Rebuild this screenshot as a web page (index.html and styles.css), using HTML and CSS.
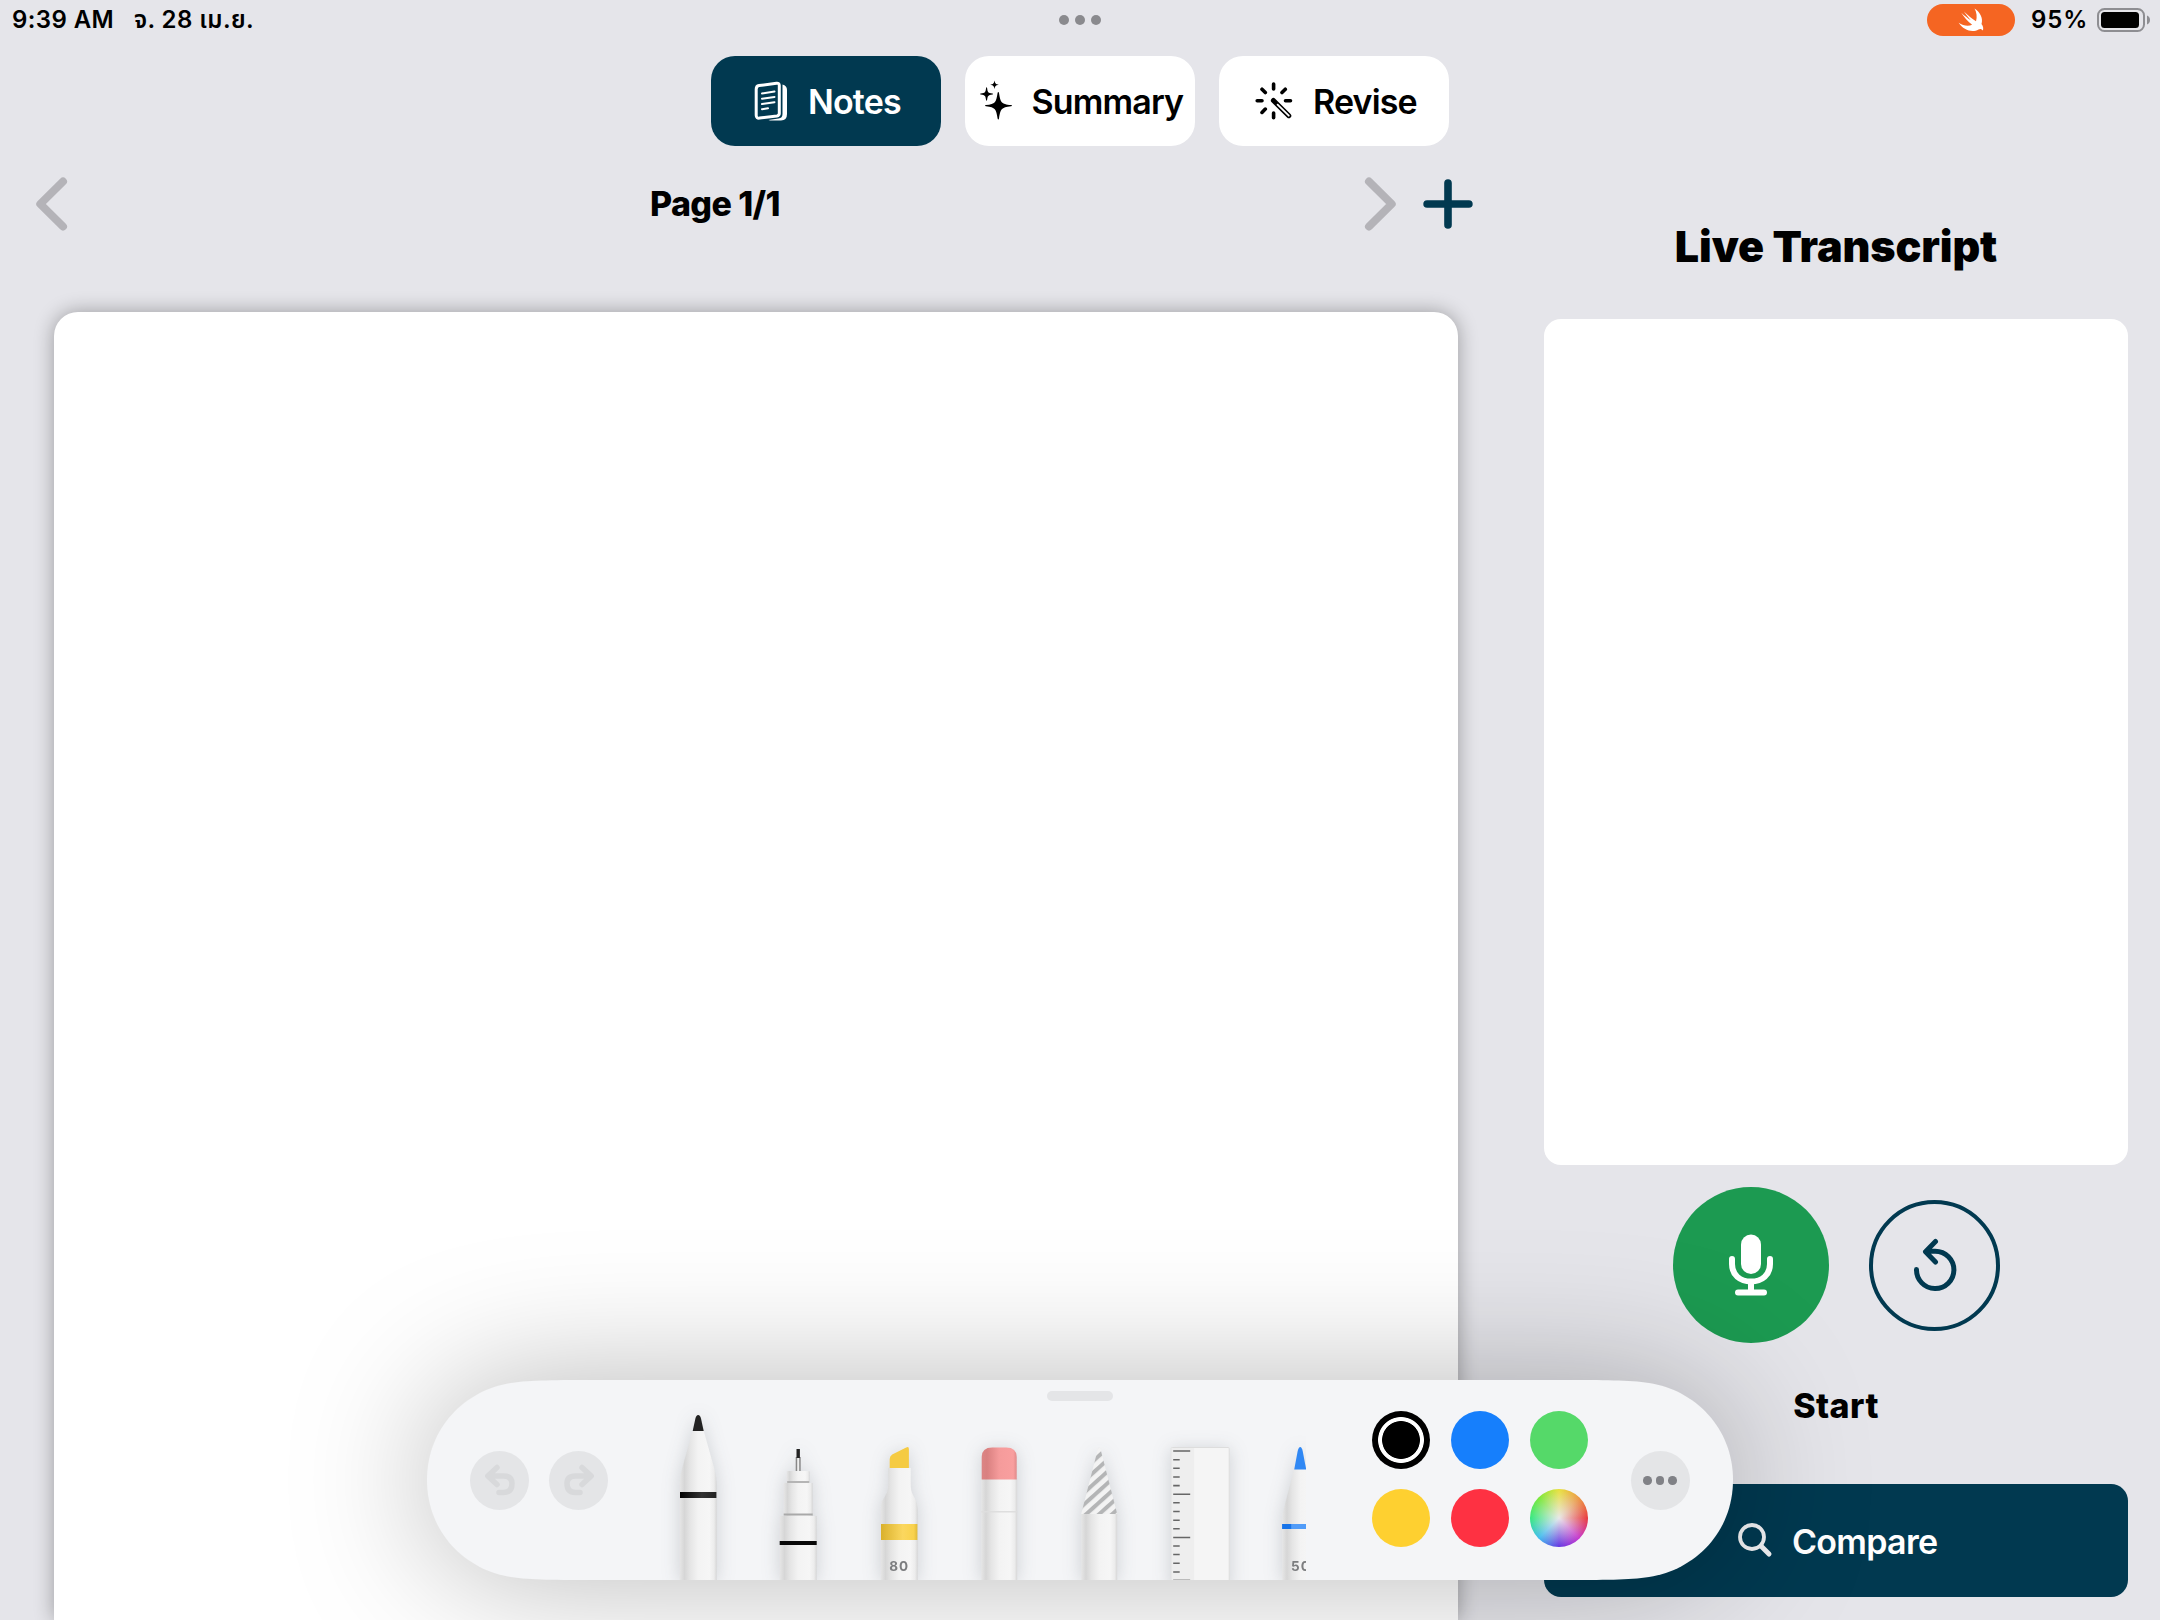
FILE: index.html
```html
<!DOCTYPE html>
<html lang="th">
<head>
<meta charset="utf-8">
<title>Notes</title>
<link rel="stylesheet" href="styles.css">
</head>
<body>
<header class="status">
  <div class="status-side"><span class="time">9:39 AM</span><span class="date">จ. 28 เม.ย.</span></div>
  <div class="dots"><i></i><i></i><i></i></div>
  <div class="status-side status-right">
    <span class="swift-pill"><svg width="26" height="24" viewBox="0 0 26 24"><path fill="#fff" d="M16.500 0.600C22.500 4.600 25.300 10.800 23.500 16C25.400 18.500 25.600 20.800 24.800 22.600C23.700 20.600 22 20.600 20.500 21.400C14.500 25 5.500 22.300 0.600 14.800C5.200 17.900 10.600 18.600 14.100 16.700C9.500 13.200 5.800 8.700 3.200 4.700C6.400 7.600 9.800 10.300 12.800 12.200C10.200 9.400 7.700 6.100 5.900 3.400C9.900 7.200 14.200 10.900 18 13.300C19.300 9.200 18.700 4.600 16.500 0.600Z"/></svg></span>
    <span class="percent">95%</span>
    <svg class="battery" width="54" height="24" viewBox="0 0 54 24"><rect x="1" y="1" width="46" height="22" rx="6.500" fill="none" stroke="#8e8e92" stroke-width="2"/><rect x="4" y="4" width="38" height="16" rx="3.500"/><path fill="#8e8e92" d="M50 7.500C54 9 54 15 50 16.500Z"/></svg>
  </div>
</header>

<nav class="tabs">
  <button class="tab tab-active">
    <svg width="34" height="40" viewBox="0 0 34 40" fill="none" stroke="#fff" stroke-linejoin="round" stroke-linecap="round"><path stroke-width="3" d="M5 4.600L22.500 2.200Q25.300 1.900 25.300 4.600V32.500Q25.300 34.500 22.900 34.900L5.600 37.100Q2.200 37.500 2.200 34.300V8.300Q2.200 5 5 4.600Z"/><path fill="#fff" stroke="none" d="M28.500 3.500Q33 4.500 33 9V33Q33 39.500 27 39.500H19Q15.500 39.500 14.500 38.900L24.500 37.600Q28.500 37 28.500 33Z"/><path stroke-width="2" d="M8 12.400L20.500 10.600M8 17.700L20.500 15.900M8 23L20.500 21.200M8 28.200L14 27.300"/></svg>
    <span>Notes</span>
  </button>
  <button class="tab tab-summary">
    <svg width="33" height="40" viewBox="0 0 33 40"><path d="M18.300 11Q18.800 11 19 12C20.600 21.500 21 23 31 24.100Q32 24.300 32 24.700Q32 25.100 31 25.300C21 26.500 20.600 28 19 37.500Q18.800 38.500 18.300 38.500Q17.800 38.500 17.600 37.500C16 28 15.600 26.500 6 25.300Q5 25.100 5 24.700Q5 24.300 6 24.100C15.600 23 16 21.500 17.600 12Q17.800 11 18.300 11ZM6.600 6.300Q7 6.300 7.100 7C7.700 11.500 8 11.900 12.400 12.600Q13.200 12.700 13.200 13Q13.200 13.300 12.400 13.400C8 14.100 7.700 14.600 7.100 19Q7 19.700 6.600 19.700Q6.200 19.700 6.100 19C5.500 14.600 5.200 14.100 .8 13.400Q0 13.300 0 13Q0 12.700 .8 12.600C5.200 11.900 5.500 11.500 6.100 7Q6.200 6.300 6.600 6.300ZM14.500-.5C15.200 2.800 15.500 3.100 18.800 3.700C15.500 4.300 15.200 4.700 14.500 8C13.800 4.700 13.500 4.300 10.200 3.700C13.500 3.100 13.800 2.800 14.500-.5Z"/></svg>
    <span>Summary</span>
  </button>
  <button class="tab tab-revise">
    <svg width="38" height="38" viewBox="0 0 38 38" fill="none" stroke="#000" stroke-linecap="round"><path stroke-width="3.600" d="M18.600 2.100V7M18.600 31V35.700M2.200 18.800H7M30.500 18.800H35.500M7 7.200L10.300 10.500M30.300 7.200L27 10.500M7 30.400L10.300 27.100"/><path stroke-width="5" d="M18.400 18.400L33.800 33.700"/><path stroke="#fff" stroke-width="1.800" d="M22.600 22.600L33.800 33.700"/></svg>
    <span>Revise</span>
  </button>
</nav>

<main class="workspace">
  <section class="notes">
    <div class="pager">
      <div class="pager-nav">
        <svg width="31" height="54" viewBox="0 0 31 54"><path class="chevron" d="M27 4.500L4.300 27L27 49.500"/></svg>
        <span class="page-label">Page 1/1</span>
        <svg width="31" height="54" viewBox="0 0 31 54"><path class="chevron" d="M4 4.500L26.700 27L4 49.500"/></svg>
      </div>
      <svg width="50" height="50" viewBox="0 0 50 50"><path class="plus" d="M25 4.100V45.900M4.100 25H45.900"/></svg>
    </div>
    <div class="paper"></div>
  </section>
  <aside class="transcript">
    <h1>Live Transcript</h1>
    <div class="transcript-box"></div>
    <div class="controls">
      <button class="mic"><svg width="46" height="64" viewBox="0 0 46 64"><rect x="13" y="1.500" width="20" height="39.500" rx="10" fill="#fff"/><path fill="none" stroke="#fff" stroke-width="6" stroke-linecap="round" d="M4 26V31C4 42 12 48.500 23 48.500S42 42 42 31V26M23 49V58M10 59.500H36"/></svg></button>
      <button class="reset"><svg width="44" height="54" viewBox="0 0 44 54" fill="none" stroke="#013950" stroke-width="5" stroke-linecap="round" stroke-linejoin="round"><path d="M3.500 31.500A18.700 18.700 0 1 0 22.200 13.200H13M22.500 3.500L12.500 13.700L22.500 24"/></svg></button>
    </div>
    <p class="start">Start</p>
    <button class="compare"><svg width="34" height="35" viewBox="0 0 34 35" fill="none" stroke="#f1f1f3"><circle cx="14" cy="14" r="12" stroke-width="3.800"/><path d="M23 23L31 31" stroke-width="5" stroke-linecap="round"/></svg><span>Compare</span></button>
  </aside>
</main>

<div class="palette">
  <svg class="palette-shape" width="1306" height="200" viewBox="0 0 1306 200"><path fill="#f4f5f7" d="M0 100C0 48 38 10 84 3C104 0 130 0 170 0H1136C1176 0 1202 0 1222 3C1268 10 1306 48 1306 100C1306 152 1268 190 1222 197C1202 200 1176 200 1136 200H170C130 200 104 200 84 197C38 190 0 152 0 100Z"/></svg>
  <div class="grabber"></div>
  <div class="palette-row">
    <div class="history">
      <button class="round"><svg width="30" height="30" viewBox="0 0 30 30"><path class="arrow" d="M12 2.500L2.800 11L12 19.500M3.500 11H18.500Q27 11 27 18.500Q27 27.500 18.500 27.500H14"/></svg></button>
      <button class="round"><svg width="30" height="30" viewBox="0 0 30 30"><path class="arrow" d="M18 2.500L27.200 11L18 19.500M26.500 11H11.500Q3 11 3 18.500Q3 27.500 11.500 27.500H16"/></svg></button>
    </div>
    <div class="tools">
      <svg class="tool" viewBox="0 0 100 200">
        <defs>
          <linearGradient id="body" x1="0" x2="1"><stop offset="0" stop-color="#e6e6e6"/><stop offset=".13" stop-color="#d6d6d6"/><stop offset=".28" stop-color="#e5e5e5"/><stop offset=".5" stop-color="#f3f3f3"/><stop offset=".8" stop-color="#f6f6f6"/><stop offset=".93" stop-color="#ececec"/><stop offset="1" stop-color="#d6d6d6"/></linearGradient>
          <linearGradient id="gold" x1="0" x2="1"><stop offset="0" stop-color="#d9b02c"/><stop offset=".6" stop-color="#fbd75f"/><stop offset=".9" stop-color="#f9d24c"/><stop offset="1" stop-color="#dfb93a"/></linearGradient>
          <linearGradient id="pink" x1="0" x2="1"><stop offset="0" stop-color="#dc8585"/><stop offset=".15" stop-color="#d98080"/><stop offset=".5" stop-color="#f59b9b"/><stop offset=".9" stop-color="#f99f9f"/><stop offset="1" stop-color="#e08a8a"/></linearGradient>
          <linearGradient id="ink" x1="0" x2="1"><stop offset="0" stop-color="#000"/><stop offset=".6" stop-color="#333"/><stop offset="1" stop-color="#222"/></linearGradient>
          <pattern id="stripes" width="8.700" height="8.700" patternUnits="userSpaceOnUse" patternTransform="rotate(-42)"><rect width="9" height="9" fill="#f3f3f3"/><rect width="9" height="4" fill="#b4b5b6"/></pattern>
        </defs>
        <path fill="url(#body)" d="M44.500 51H55.500L66 88Q68.500 97 68.500 104V200H31.500V104Q31.500 97 34 88Z"/>
        <path fill="#222" d="M50 35Q52 35 52.800 38.500L55.500 51H44.500L47.200 38.500Q48 35 50 35Z"/>
        <rect x="31.800" y="112" width="36.400" height="6" fill="url(#ink)"/>
      </svg>
      <svg class="tool" viewBox="0 0 100 200">
        <rect x="47.500" y="77" width="5" height="15" fill="#888"/><rect x="49" y="77" width="2" height="14" fill="#eee"/><rect x="48.300" y="69" width="3.400" height="9" fill="#222"/>
        <rect x="38.500" y="91" width="23" height="12" rx="1" fill="url(#body)"/><rect x="39" y="101" width="22" height="2" fill="#b5b5b5"/>
        <rect x="35.500" y="103" width="29" height="33" fill="url(#body)"/><rect x="35.500" y="133.500" width="29" height="2" fill="#a9a9a9"/>
        <rect x="31.500" y="136" width="37" height="64" fill="url(#body)"/><rect x="31.500" y="161" width="37" height="4" fill="#090909"/>
      </svg>
      <svg class="tool" viewBox="0 0 100 200">
        <path fill="url(#body)" d="M39 88H61.500V105C61.500 117 68.500 117 68.500 130V200H31.500V130C31.500 117 39 117 39 105Z"/>
        <path fill="#f5cb42" d="M40.500 88V79Q40.500 76 43 74.500L57 67.500Q59.700 66 59.700 69V88Z"/>
        <rect x="31.800" y="144" width="36.400" height="16" fill="url(#gold)"/><text class="tool-size" x="50" y="191" text-anchor="middle">80</text>
      </svg>
      <svg class="tool" viewBox="0 0 100 200">
        <rect x="32" y="98" width="36" height="102" fill="url(#body)"/><path fill="url(#pink)" d="M32.500 99.500V77Q32.500 67.500 43 67.500H57Q67.500 67.500 67.500 77V99.500Z"/><rect x="32" y="131" width="36" height="1.500" fill="#dedede"/>
      </svg>
      <svg class="tool" viewBox="0 0 100 200">
        <path fill="url(#stripes)" d="M47.700 69Q49 66 50.300 69L67 134H31Z"/><rect x="31" y="134" width="36" height="66" fill="url(#body)"/>
      </svg>
      <svg class="tool" viewBox="0 0 100 200">
        <rect x="21" y="67.500" width="58" height="140" rx="1" fill="#f5f5f5" stroke="#dddddd"/><rect x="21.500" y="68" width="22.500" height="135" fill="#eeeeee"/>
        <path stroke="#666" stroke-width="1.600" d="M23 71H40M23 114.200H40M23 157.500H40M23 79.700H29.500M23 88.300H29.500M23 97H29.500M23 105.600H29.500M23 122.800H29.500M23 131.500H29.500M23 140.200H29.500M23 148.800H29.500M23 166H29.500M23 174.500H29.500M23 183.200H29.500M23 192H29.500"/><path stroke="#bbb" d="M23 199.500H40"/>
      </svg>
      <svg class="tool" viewBox="0 0 100 200">
        <path fill="url(#body)" d="M44 89H56L66 127Q68 134 68 140V200H32V140Q32 134 34 127Z"/>
        <path fill="#3088f4" d="M50 67Q51.500 67 52.500 71L56 89.500H44L47.500 71Q48.500 67 50 67Z"/>
        <rect x="32" y="144" width="36" height="5" fill="#519cf8"/><rect x="32" y="144" width="9" height="5" fill="#1673e8"/><text class="tool-size" x="50.700" y="191" text-anchor="middle">50</text>
      </svg>
    </div>
    <div class="swatches">
      <span class="swatch black"></span><span class="swatch blue"></span><span class="swatch green"></span>
      <span class="swatch yellow"></span><span class="swatch red"></span><span class="swatch wheel"></span>
    </div>
    <button class="round more"><i></i><i></i><i></i></button>
  </div>
</div>
</body>
</html>
```
FILE: styles.css
```css
* { box-sizing: border-box; }
body {
  position: relative;
  display: flex;
  flex-direction: column;
  width: 2160px;
  height: 1620px;
  margin: 0;
  overflow: hidden;
  background: #e5e5ea;
  color: #000;
  font-family: Inter, "Noto Sans Thai", "Noto Sans", sans-serif;
}
button { border: 0; padding: 0; font: inherit; color: inherit; background: none; }
svg { display: block; flex: none; overflow: visible; }

.status {
  display: grid;
  grid-template-columns: 1fr auto 1fr;
  align-items: center;
  height: 40px;
  font-size: 24px;
  font-weight: 600;
  line-height: 40px;
  white-space: nowrap;
}
.status-side { display: flex; align-items: center; height: 40px; padding-left: 12px; }
.time { width: 122px; letter-spacing: .4px; }
.date { letter-spacing: .4px; }
.dots { display: flex; gap: 6px; }
.dots i { width: 10px; height: 10px; border-radius: 50%; background: #8a8a8e; }
.status-right { justify-content: flex-end; padding-right: 9px; }
.swift-pill { display: flex; align-items: center; justify-content: center; width: 88px; height: 32px; border-radius: 16px; background: #f56522; margin-right: 16px; }
.percent { width: 66px; letter-spacing: .9px; }

.tabs { display: flex; justify-content: center; gap: 24px; padding-top: 16px; height: 106px; }
.tab {
  display: flex;
  align-items: center;
  gap: 20px;
  width: 230px;
  height: 90px;
  padding-left: 43px;
  border-radius: 24px;
  background: #fff;
  font-size: 34px;
  font-weight: 600;
  letter-spacing: -.85px;
  white-space: nowrap;
}
.tab span { padding-top: 1px; }
.tab-active { background: #013950; color: #fff; }
.tab-summary { padding-left: 15px; gap: 18.500px; }
.tab-revise { padding-left: 36px; }

.workspace { display: flex; height: 1474px; }
.notes { display: flex; flex-direction: column; width: 1512px; padding-left: 36px; }
.pager { display: flex; align-items: center; gap: 27px; height: 116px; margin-bottom: 50px; }
.pager-nav { display: flex; align-items: center; justify-content: space-between; width: 1360px; }
.chevron { fill: none; stroke: #b4b3b8; stroke-width: 8; stroke-linecap: round; stroke-linejoin: round; }
.plus { fill: none; stroke: #013950; stroke-width: 7.600; stroke-linecap: round; }
.page-label { padding: 0 2px 2px 0; font-size: 34px; font-weight: 800; letter-spacing: -.6px; }
.paper {
  flex: 1;
  width: 1404px;
  margin-left: 18px;
  border-radius: 24px 24px 0 0;
  background: #fff;
  box-shadow: 0 0 20px rgba(0, 0, 0, .33);
}

.transcript { display: flex; flex-direction: column; width: 616px; margin-left: 0; padding: 71px 0 0 32px; }
.transcript h1 { margin: 0; height: 102px; line-height: 58px; font-size: 43px; font-weight: 900; letter-spacing: -.1px; text-align: center; }
.transcript-box { height: 846px; border-radius: 17px; background: #fff; }
.controls { display: flex; align-items: center; justify-content: center; gap: 40px; padding: 22px 0 0 1px; height: 178px; }
.mic, .reset { display: flex; align-items: center; justify-content: center; border-radius: 50%; }
.mic { width: 156px; height: 156px; background: #1c9a51; }
.reset { width: 131px; height: 131px; border: 4px solid #013950; }
.start { margin: 43px 0 0; height: 98px; line-height: 40px; font-size: 34px; font-weight: 800; letter-spacing: .4px; text-align: center; }
.compare {
  display: flex;
  align-items: center;
  gap: 20px;
  height: 113px;
  padding-left: 194px;
  border-radius: 17px;
  background: #013950;
  color: #fff;
  font-size: 34px;
  font-weight: 600;
  letter-spacing: -.7px;
}
.compare span { padding-top: 1px; }

/* Floating drawing palette */
.palette { position: absolute; left: 427px; top: 1380px; width: 1306px; height: 200px; }
.palette-shape { position: absolute; inset: 0; filter: drop-shadow(0 0 68px rgba(0, 0, 0, .28)); }
.grabber { position: absolute; left: 620px; top: 11px; width: 66px; height: 10px; border-radius: 5px; background: #e4e5e7; }
.palette-row { position: relative; display: flex; align-items: center; height: 200px; padding-left: 43px; }
.history { display: flex; gap: 20px; width: 178px; }
.round { display: flex; align-items: center; justify-content: center; width: 59px; height: 59px; border-radius: 50%; background: #e4e5e7; }
.arrow { fill: none; stroke: #d8d9db; stroke-width: 5.500; stroke-linecap: round; stroke-linejoin: round; }
.tools { display: flex; width: 658px; height: 200px; overflow: hidden; }
.tool { width: 100.400px; height: 200px; filter: drop-shadow(0 2px 9px rgba(40, 50, 60, .18)); }
.tool-size { font: 700 13.500px Inter, sans-serif; letter-spacing: 1px; fill: #7c7d7f; }
.swatches { display: grid; grid-template-columns: repeat(3, 58px); gap: 20px 21px; margin: 0 0 2px 66px; }
.swatch { width: 58px; height: 58px; border-radius: 50%; }
.black { background: radial-gradient(circle, #000 18.500px, #fff 19.300px, #fff 22.500px, #000 23.300px); }
.blue { background: #167ffc; }
.green { background: #55d969; }
.yellow { background: #fed030; }
.red { background: #fe3142; }
.wheel { background: radial-gradient(circle, rgba(232, 232, 232, 1) 0, rgba(232, 232, 232, 0) 75%), conic-gradient(#e8e030, #ec9238 45deg, #e92d30 90deg, #c42ccb 135deg, #5b2be2 180deg, #35b9f0 225deg, #2ae878 270deg, #72e82c 315deg, #e8e030); }
.more { gap: 4px; margin-left: 43px; padding: 1px 1.500px 0 0; }
.more i { width: 8.500px; height: 8.500px; border-radius: 50%; background: #808186; }
```
